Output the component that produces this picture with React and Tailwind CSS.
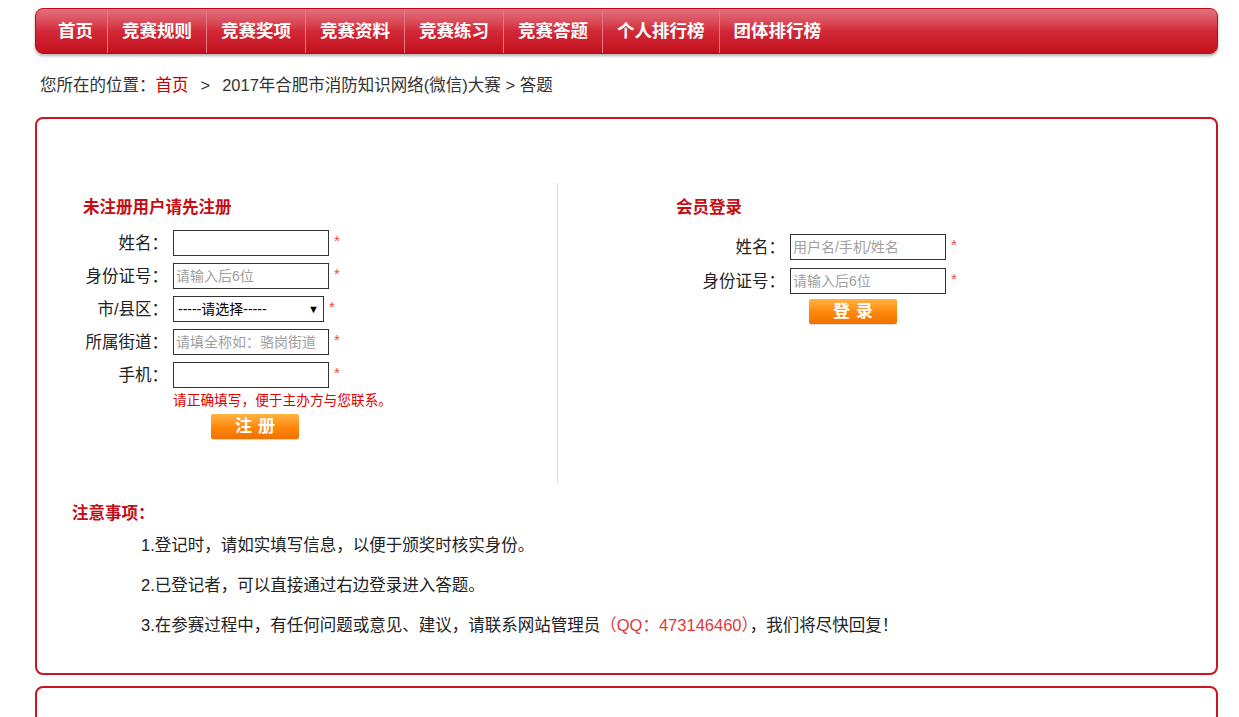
import React from 'react';

const navItems = ['首页', '竞赛规则', '竞赛奖项', '竞赛资料', '竞赛练习', '竞赛答题', '个人排行榜', '团体排行榜'];

const font = "font-['Liberation_Sans','Noto_Sans_CJK_SC',sans-serif]";

const Star = () => (
  <span className="ml-[5px] -mt-[6px] text-[15px] leading-none text-[#f04848]">*</span>
);

const TextBox = ({ placeholder, width = 'w-[156px]' }) => (
  <input
    readOnly
    placeholder={placeholder}
    className={`${width} h-[26px] border border-[#333] bg-white px-[2px] text-[14px] text-[#333] placeholder:text-[#a0a0a0] outline-none`}
  />
);

const OrangeButton = ({ label }) => (
  <button className="w-[88px] h-[25px] rounded-[2px] bg-gradient-to-b from-[#ffb340] via-[#ff8a0a] to-[#f07000] text-white text-[17px] font-bold leading-none tracking-[6px] pl-[6px] shadow-[0_1px_1px_rgba(0,0,0,0.15)]">
    {label}
  </button>
);

const FormRow = ({ label, labelW, children, mb }) => (
  <div className={`flex items-center ${mb}`}>
    <span className={`${labelW} text-right text-[16.5px] text-[#222] pr-[5px]`}>{label}</span>
    {children}
    <Star />
  </div>
);

export default function App() {
  return (
    <div className={`${font} bg-white min-h-[717px] pt-[8px] pl-[35px] w-[1239px] overflow-hidden`}>
      {/* nav */}
      <nav className="w-[1183px] h-[46px] rounded-[8px] border border-[#b80e1a] bg-gradient-to-b from-[#e27080] via-[#d22838] to-[#c40f1c] shadow-[0_2px_3px_rgba(0,0,0,0.3)] flex items-stretch pl-[8px]">
        {navItems.map((n, i) => (
          <a
            key={n}
            href="#"
            className={`flex items-center px-[14px] text-[17.5px] font-bold text-white ${i < navItems.length - 1 ? 'border-r border-[#e47884]' : ''}`}
          >
            {n}
          </a>
        ))}
      </nav>

      {/* breadcrumb */}
      <div className="mt-[20px] pl-[5px] text-[16.5px] leading-[22px] text-[#333]">
        您所在的位置：<span className="text-[#cc0000]">首页</span>
        <span className="mx-[12px]">&gt;</span>2017年合肥市消防知识网络(微信)大赛 &gt; 答题
      </div>

      {/* main box */}
      <div className="mt-[21px] w-[1183px] rounded-[8px] border-2 border-[#cc1422] pt-[64px] pb-[37px]">
        <div className="flex">
          {/* register */}
          <div className="w-[521px] h-[300px] border-r border-[#dcdcdc] pl-[46px] pt-[13px]">
            <h3 className="text-[16.5px] leading-[22px] font-bold text-[#c40d14]">未注册用户请先注册</h3>
            <div className="mt-[12px]">
              <FormRow label="姓名：" labelW="w-[90px]" mb="mb-[7px]">
                <TextBox />
              </FormRow>
              <FormRow label="身份证号：" labelW="w-[90px]" mb="mb-[7px]">
                <TextBox placeholder="请输入后6位" />
              </FormRow>
              <FormRow label="市/县区：" labelW="w-[90px]" mb="mb-[7px]">
                <div className="w-[151px] h-[26px] border border-[#333] flex items-center justify-between px-[4px] text-[14px] text-black">
                  <span>-----请选择-----</span>
                  <span className="text-[11px]">▼</span>
                </div>
              </FormRow>
              <FormRow label="所属街道：" labelW="w-[90px]" mb="mb-[7px]">
                <TextBox placeholder="请填全称如：骆岗街道" />
              </FormRow>
              <FormRow label="手机：" labelW="w-[90px]" mb="">
                <TextBox />
              </FormRow>
              <p className="ml-[90px] mt-[4px] text-[13.7px] leading-[18px] text-[#e00000]">请正确填写，便于主办方与您联系。</p>
              <div className="ml-[128px] mt-[4px]">
                <OrangeButton label="注册" />
              </div>
            </div>
          </div>

          {/* login */}
          <div className="flex-1 pl-[118px] pt-[13px]">
            <h3 className="text-[16.5px] leading-[22px] font-bold text-[#c40d14]">会员登录</h3>
            <div className="mt-[16px] -ml-[5px]">
              <FormRow label="姓名：" labelW="w-[119px]" mb="mb-[8px]">
                <TextBox placeholder="用户名/手机/姓名" width="w-[156px]" />
              </FormRow>
              <FormRow label="身份证号：" labelW="w-[119px]" mb="mb-[5px]">
                <TextBox placeholder="请输入后6位" width="w-[156px]" />
              </FormRow>
              <div className="ml-[138px]">
                <OrangeButton label="登录" />
              </div>
            </div>
          </div>
        </div>

        {/* notes */}
        <div className="mt-[19px] pl-[35px]">
          <h3 className="text-[16.5px] leading-[22px] font-bold text-[#c40d14]">注意事项：</h3>
          <ul className="mt-[10px] pl-[69px] text-[16.5px] leading-[22px] text-[#222] flex flex-col gap-[18px]">
            <li>1.登记时，请如实填写信息，以便于颁奖时核实身份。</li>
            <li>2.已登记者，可以直接通过右边登录进入答题。</li>
            <li>
              3.在参赛过程中，有任何问题或意见、建议，请联系网站管理员
              <span className="text-[#e03a3a]">（QQ：473146460）</span>，我们将尽快回复！
            </li>
          </ul>
        </div>
      </div>

      {/* next box */}
      <div className="mt-[11px] w-[1183px] h-[60px] rounded-t-[8px] border-2 border-[#cc1422]"></div>
    </div>
  );
}
